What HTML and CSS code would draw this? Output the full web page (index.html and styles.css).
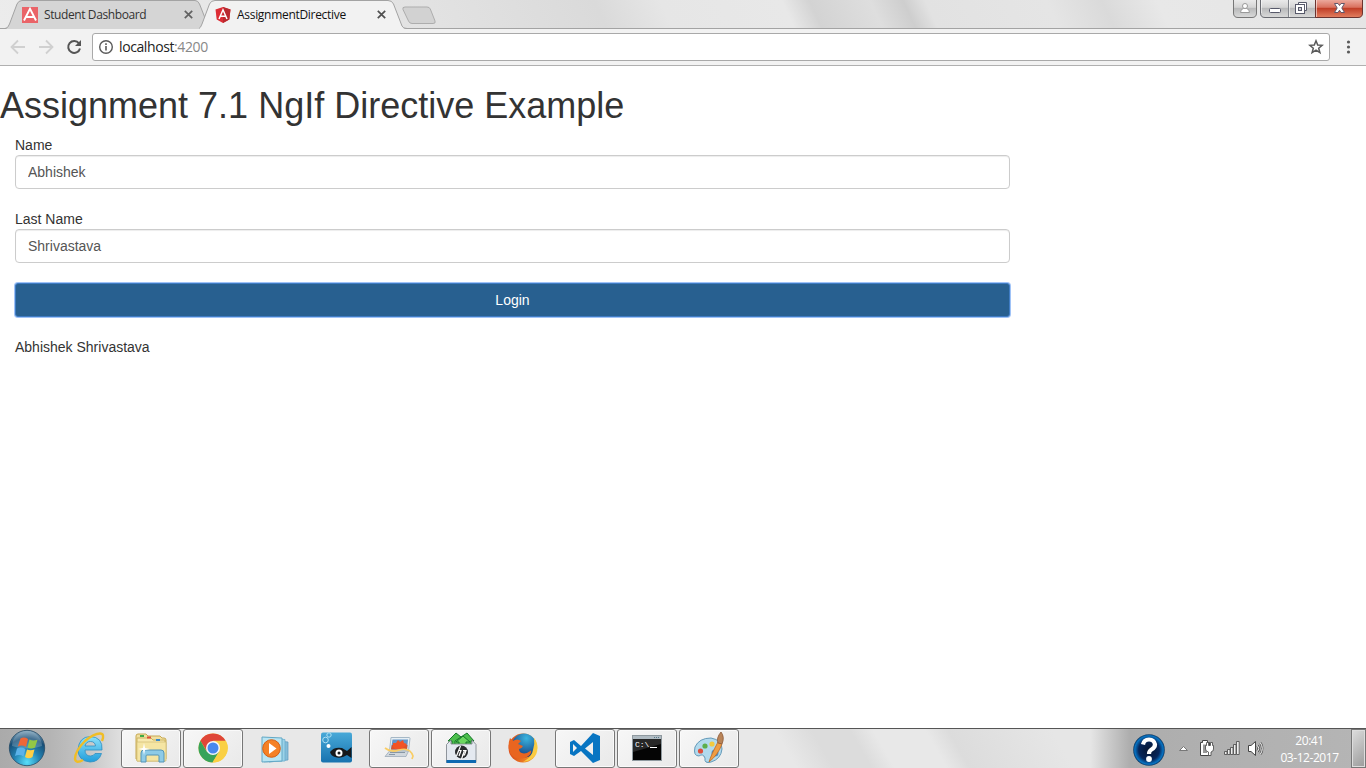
FILE: index.html
```html
<!DOCTYPE html>
<html lang="en">
<head>
<meta charset="utf-8">
<title>AssignmentDirective</title>
<link rel="stylesheet" href="styles.css">
</head>
<body>
<div class="screen">
  <header class="tabstrip">
    <div class="tab tab-back">
      <svg class="tab-shape" width="207" height="29" viewBox="0 0 207 29"><path d="M1 29Q3 28 4.500 24L12 4Q13.500 .5 17 .5H190Q193 .5 194.500 4L204 29Z" fill="#d5d5d5"/><path d="M0 28.500Q3 28.500 4.500 24L12 4Q13.500 .5 17 .5H190Q193 .5 194.500 4L200 18" fill="none" stroke="#a3a3a3"/></svg>
      <svg class="fav" width="16" height="16" viewBox="0 0 16 16"><path d="M0 0H16V16H0Z" fill="#ea6468"/><path d="M2 13.500L8 1.800L14 13.500M4.500 10H11.500" fill="none" stroke="#fff" stroke-width="1.900"/></svg>
      <span class="tab-title title-one">Student Dashboard</span>
      <svg class="tab-x" width="9" height="9" viewBox="0 0 9 9"><path d="M.8 .8L8.200 8.200M8.200 .8L.8 8.200" stroke="#626262" stroke-width="1.700"/></svg>
    </div>
    <div class="tab tab-front">
      <svg class="tab-shape" width="210" height="29" viewBox="0 0 210 29"><path d="M0 29Q1.500 28 3 24L10.500 4Q12 .5 16 .5H189Q193 .5 194.500 4L203 26Q204 29 208 29Z" fill="#f2f2f2"/><path d="M0 28.500Q1.500 28 3 24L10.500 4Q12 .5 16 .5H189Q193 .5 194.500 4L203 26Q204 28.500 208 28.500" fill="none" stroke="#a3a3a3"/></svg>
      <svg class="fav" width="16" height="16" viewBox="0 0 16 16"><path d="M8 0L15.500 2.600L14.300 12.500L8 16L1.700 12.500L.5 2.600Z" fill="#dd2c35"/><path d="M8 0L15.500 2.600L14.300 12.500L8 16Z" fill="#b92a30"/><path d="M4 12L8 2.800L12 12M5.700 9.300H10.300" fill="none" stroke="#fff" stroke-width="1.500"/></svg>
      <span class="tab-title title-two">AssignmentDirective</span>
      <svg class="tab-x" width="9" height="9" viewBox="0 0 9 9"><path d="M.8 .8L8.200 8.200M8.200 .8L.8 8.200" stroke="#505050" stroke-width="1.700"/></svg>
    </div>
    <svg class="newtab" width="36" height="19" viewBox="0 0 36 19"><path d="M4 1H26Q28.500 1 29.300 3L34 15Q35 17.500 32 17.500H11Q8.500 17.500 7.500 15L2 3.500Q1 1 4 1Z" fill="#d2d2d2" stroke="#adadad"/></svg>
    <div class="win-controls">
      <svg width="134" height="20" viewBox="0 0 134 20">
        <defs>
          <linearGradient id="glass" x2="0" y2="1"><stop offset="0" stop-color="#ededed"/><stop offset=".45" stop-color="#d4d4d4"/><stop offset=".5" stop-color="#b8b9ba"/><stop offset="1" stop-color="#dadada"/></linearGradient>
          <linearGradient id="red" x2="0" y2="1"><stop offset="0" stop-color="#eeb0a4"/><stop offset=".45" stop-color="#d9705d"/><stop offset=".5" stop-color="#c03d26"/><stop offset="1" stop-color="#e38061"/></linearGradient>
        </defs>
        <path d="M1.500 -1V13Q1.500 17.500 6 17.500H20Q24.500 17.500 24.500 13V-1Z" fill="url(#glass)" stroke="#777"/>
        <path d="M28.500 -1V13Q28.500 17.500 33 17.500H84V-1Z" fill="url(#glass)" stroke="#686a70"/>
        <path d="M83.500 -1V17.500H126Q130.500 17.500 130.500 13V-1Z" fill="url(#red)" stroke="#6c332f"/>
        <path d="M56.500 0V17" stroke="#83868c"/>
        <path d="M57.500 0V17M29.500 0V13M84.500 0V17" stroke="#fff" stroke-opacity=".55"/>
        <path d="M8.500 12.500Q8.500 9 11.500 8.500H14.500Q17.500 9 17.500 12.500Z" fill="#fff" stroke="#999"/><circle cx="13" cy="6" r="2.500" fill="#fff" stroke="#999"/>
        <rect x="37.500" y="8.500" width="11" height="4" rx="1" fill="#fff" stroke="#57596a"/>
        <path d="M66.500 4.500V2.500H74.500V10.500H72.500" fill="#fff" stroke="#57596a"/><rect x="63.500" y="4.500" width="9" height="9" fill="#fff" stroke="#57596a"/><rect x="66.500" y="7.500" width="3" height="3" fill="#d0d0d6" stroke="#57596a"/>
        <path d="M102.500 3.500H106L107.500 5.500L109 3.500H112.500L109.800 8L112.500 12.500H109L107.500 10.200L106 12.500H102.500L105.200 8Z" fill="#fff" stroke="#62576a"/>
      </svg>
    </div>
  </header>

  <div class="toolbar">
    <svg class="nav" width="92" height="36" viewBox="0 0 92 36">
      <path d="M25 18H12M18 11.500L11.500 18L18 24.500M39 18H52M46 11.500L52.500 18L46 24.500" fill="none" stroke="#d0d0d0" stroke-width="1.800"/>
      <path d="M79 14.300A6 6 0 1 0 80 19.500" fill="none" stroke="#555" stroke-width="2"/><path d="M81 11V17H75Z" fill="#555"/>
    </svg>
    <div class="omnibox">
      <svg width="16" height="16" viewBox="0 0 16 16"><circle cx="8" cy="8" r="6.300" fill="none" stroke="#5a5a5a" stroke-width="1.400"/><path d="M8 7V11.500M8 4.300V5.900" stroke="#5a5a5a" stroke-width="1.600"/></svg>
      <span class="url">localhost<span class="port">:4200</span></span>
      <svg class="star" width="16" height="16" viewBox="0 0 16 16"><path d="M8 1.800L9.700 6L14.200 6.300L10.700 9.200L11.900 13.700L8 11.200L4.100 13.700L5.300 9.200L1.800 6.300L6.300 6Z" fill="none" stroke="#5a5a5a" stroke-width="1.500"/></svg>
    </div>
    <svg class="dots" width="6" height="16" viewBox="0 0 6 16"><g fill="#5a5a5a"><circle cx="3.500" cy="3" r="1.600"/><circle cx="3.500" cy="8" r="1.600"/><circle cx="3.500" cy="13" r="1.600"/></g></svg>
  </div>

  <main class="page">
    <h1>Assignment 7.1 NgIf Directive Example</h1>
    <form class="form">
      <label for="first">Name</label>
      <input id="first" class="field" type="text" value="Abhishek">
      <label for="last" class="second">Last Name</label>
      <input id="last" class="field" type="text" value="Shrivastava">
      <button type="button" class="login">Login</button>
      <p class="result">Abhishek Shrivastava</p>
    </form>
  </main>

  <footer class="taskbar">
    <div class="start">
      <svg width="40" height="38" viewBox="0 0 40 38">
        <defs><radialGradient id="orb" cx=".5" cy=".9" r=".9"><stop offset="0" stop-color="#59dffa"/><stop offset=".4" stop-color="#2384b4"/><stop offset=".75" stop-color="#174e77"/><stop offset="1" stop-color="#7fa4bb"/></radialGradient></defs>
        <circle cx="20" cy="19" r="17.700" fill="url(#orb)" stroke="#244a66" stroke-width=".8"/>
        <path d="M5 17A15 15 0 0 1 35 17Q20 22 5 17Z" fill="#fff" opacity=".2"/>
        <path d="M13.500 9.500Q17 7.500 21 10L19 18Q15 15.500 10.800 17.500Z" fill="#ef6637"/><path d="M22.500 10.500Q26 12.500 30.500 10.800L28 18.500Q24 20.500 20.500 18.500Z" fill="#93c746"/><path d="M10 19.500Q14 17.500 18.500 20L16.500 27.500Q12.500 25 8 27Z" fill="#5bb2e9"/><path d="M20 20.500Q23 22 27.500 20.500L25.500 28Q22 30.500 18 28Z" fill="#fdcf45"/>
      </svg>
    </div>
    <div class="task">
      <svg width="36" height="36" viewBox="0 0 36 36"><defs><linearGradient id="ie" x2="0" y2="1"><stop stop-color="#8ce2fb"/><stop offset="1" stop-color="#219ddb"/></linearGradient></defs><path d="M31 20H14Q14 26 19.500 26Q22.500 26 24 23.500H30.500Q28 32 19 32Q7 31 7 19.500Q8 7 19 6.500Q32 7 31 20ZM14 16H24.500Q24 11.500 19.500 11.500Q15 11.500 14 16Z" fill="url(#ie)" stroke="#2f8fc2" stroke-width=".8"/><path d="M31 11Q34 3.500 29 3.500Q23 3.500 14 11Q4 21 4 29Q5 34 12 30" fill="none" stroke="#f0bd26" stroke-width="2.400"/></svg>
    </div>
    <div class="task open">
      <svg width="36" height="36" viewBox="0 0 36 36"><path d="M3 6Q3 4 5 4H13L15 6H27L29 8H31Q33 8 33 10V29H3Z" fill="#f0dfa0" stroke="#c7a952"/><path d="M4 8H18L20 10H32V31H4Z" fill="#f7e9ae" stroke="#ccb461"/><path d="M4 12H33V31H4Z" fill="#f5e5a3" stroke="#d1bc73" stroke-width=".7"/><path d="M7 5H11V7H7Z" fill="#3eab46"/><path d="M14 6.500H18V8.500H14Z" fill="#df5039"/><path d="M23 9H27V11H23Z" fill="#398ac9"/><path d="M8 32V23Q8 20 11 20H28Q31 20 31 23V32H26V26Q26 25 25 25H14Q13 25 13 26V32Z" fill="#8ecbe7" stroke="#5594b7"/><path d="M11 13L12 18L17 19L12 20L11 25L10 20L5 19L10 18Z" fill="#fff"/></svg>
    </div>
    <div class="task open">
      <svg width="36" height="36" viewBox="0 0 36 36"><circle cx="18" cy="18" r="14.500" fill="#f9d247"/><path d="M5.400 10.700A14.500 14.500 0 0 1 30.600 10.700H18L12 21.500Z" fill="#df4638"/><path d="M5.400 10.700A14.500 14.500 0 0 0 17.500 32.500L24 21.500H11.700Z" fill="#37a35a"/><path d="M18 11H31A14.500 14.500 0 0 1 17.500 32.500L24.500 21.500Z" fill="#fad044"/><circle cx="18" cy="18" r="7" fill="#f4f6fa"/><circle cx="18" cy="18" r="5.500" fill="#4788ee"/></svg>
    </div>
    <div class="task">
      <svg width="36" height="36" viewBox="0 0 36 36"><path d="M12 10L31 12V30L12 32Z" fill="#86bdd9" stroke="#5b99bd" stroke-width=".7"/><path d="M7 8L28 9.500V31L7 32Z" fill="#9cd2e8" stroke="#65aecd" stroke-width=".7"/><path d="M5 7L25 8V31L5 32Z" fill="#b9e5f3" stroke="#62a8c6"/><circle cx="14.500" cy="18.500" r="8.800" fill="#f58125" stroke="#d55f14"/><path d="M12 13L19.500 18.500L12 24Z" fill="#fff"/></svg>
    </div>
    <div class="task">
      <svg width="36" height="36" viewBox="0 0 36 36"><defs><linearGradient id="sea" x2="0" y2="1"><stop stop-color="#48a9d8"/><stop offset="1" stop-color="#1772af"/></linearGradient></defs><rect x="2" y="2.500" width="31" height="30" rx="2" fill="url(#sea)"/><circle cx="6.500" cy="10" r="2.800" fill="none" stroke="#aee0f4"/><circle cx="10" cy="5" r="2.200" fill="none" stroke="#aee0f4"/><circle cx="9.500" cy="16" r="2" fill="#fff"/><path d="M11 22Q15 16.500 23 18L28 21L32.500 17V28L28 25Q22 29 16 27Q12 26 11 22Z" fill="#16191c"/><circle cx="20" cy="23" r="3.500" fill="#fff"/><circle cx="20" cy="23" r="1.500" fill="#16191c"/></svg>
    </div>
    <div class="task open">
      <svg width="36" height="36" viewBox="0 0 36 36"><path d="M10 7.500H28Q29 7.500 29 8.500L27.500 21H8.500Z" fill="#e7eff4" stroke="#a6b8c6"/><path d="M11.500 9.500H27L26 19.500H10Z" fill="#6495c8"/><path d="M10.800 15H26.500L26 19.500H10Z" fill="#d9532d"/><path d="M12 13L15 13L17 10L19 12L22 10L23 13L26 14L23 17L21 19H14L12 17Z" fill="#f35325"/><path d="M8.500 21H27.500L25 26.500H4Z" fill="#d0d7dd" stroke="#95a4b1" stroke-width=".7"/><path d="M9 22.500H24M8 24.500H14" stroke="#748697" stroke-width=".8"/><path d="M4 18Q10 23 18 20Q29 17 32 26L31 29" fill="none" stroke="#f9cd65" stroke-width="1.700"/></svg>
    </div>
    <div class="task open">
      <svg width="36" height="36" viewBox="0 0 36 36"><path d="M9 15V11H5L13 3L18 7L24 3L31 11H28V15Z" fill="#4cbe4c" stroke="#15762a"/><path d="M16 15V12H13L20 6L27 12H23V15M12 15V11L18 7" fill="#6bd75f" stroke="#15762a"/><path d="M3.500 14.500L8 10V14H29V10L33 14.500V32.500H3.500Z" fill="#e4e9f0" stroke="#777e86" stroke-width=".8"/><path d="M3.500 30H33V33H3.500Z" fill="#0d69b1"/><circle cx="18.500" cy="22" r="6.500" fill="#292b2e"/><path d="M17.500 16L13.500 26M15.500 20.500H18L16 26M21.500 20.500L18.500 29M20 20.500H23L21.500 25H19" fill="none" stroke="#fff" stroke-width="1.200"/></svg>
    </div>
    <div class="task">
      <svg width="36" height="36" viewBox="0 0 36 36"><defs><linearGradient id="fire"><stop stop-color="#d9481b"/><stop offset=".7" stop-color="#f08a25"/><stop offset="1" stop-color="#fcda4c"/></linearGradient><radialGradient id="globe" cx=".6" cy=".2" r=".8"><stop stop-color="#3ab4df"/><stop offset="1" stop-color="#143a7e"/></radialGradient></defs><circle cx="18" cy="18" r="14.500" fill="url(#fire)"/><circle cx="19" cy="15.500" r="12" fill="url(#globe)"/><path d="M5 8L8 11Q12 8 16 11L13 14L18 16Q17 18.500 14 19Q14 23 19 23.500Q23 23 26 20.500Q27 25 20 28Q10 30 5.500 24Q2 16 5 8Z" fill="#e96520"/><path d="M29 8Q34 14 31.500 21Q29 31 18 32Q27 27 28 20Q30 14 29 8Z" fill="#f9cb42"/></svg>
    </div>
    <div class="task open">
      <svg width="36" height="36" viewBox="0 0 36 36"><path fill-rule="evenodd" d="M3 12L7 10L14 16L26 3L33 6V30L26 33L14 21L7 26L3 24ZM6 14V22L10 18ZM18 18.500L26 25V12Z" fill="#0875c2"/></svg>
    </div>
    <div class="task open">
      <svg width="36" height="36" viewBox="0 0 36 36"><rect x="3.500" y="5.500" width="29" height="25" fill="#050505" stroke="#8f999f"/><path d="M4 6H32V9H4Z" fill="#b0bbc2"/><path d="M25 7.500H31" stroke="#537688" stroke-dasharray="1 1"/><path d="M4 9H32V14L4 22Z" fill="#777" opacity=".3"/><text x="6" y="17" class="console">C:\</text><path d="M21 17.500H28" stroke="#fff"/></svg>
    </div>
    <div class="task open">
      <svg width="36" height="36" viewBox="0 0 36 36"><path d="M4 17Q8 8 20 8Q31 10 31 19Q30 29 20 32Q13 34 14 28Q12 23 8 26Q2 26 4 17Z" fill="#b2daed" stroke="#6399b8"/><circle cx="9.500" cy="21" r="2.600" fill="#dd503e"/><circle cx="14" cy="16" r="2.600" fill="#5caf4c"/><circle cx="21" cy="14" r="2.600" fill="#f3ca3f"/><circle cx="24" cy="23" r="3.500" fill="#498dc5"/><path d="M18 32Q20 25 27 12L31 14Q27 25 18 32Z" fill="#ef9d43" stroke="#bd6824" stroke-width=".8"/><path d="M27 13Q25 8 30 2Q34 7 31 14Z" fill="#b98458" stroke="#8c5937" stroke-width=".8"/></svg>
    </div>
    <div class="tray">
      <svg class="help" width="34" height="34" viewBox="0 0 34 34"><defs><radialGradient id="q"><stop stop-color="#071530"/><stop offset=".65" stop-color="#07265a"/><stop offset=".9" stop-color="#0874c4"/><stop offset="1" stop-color="#0c355e"/></radialGradient></defs><circle cx="17" cy="17" r="15.800" fill="url(#q)"/><path d="M11 11.500Q12 6.500 17 6.500T23 11.500Q23 14.500 19.500 16.500Q17 18 17 21" fill="none" stroke="#fff" stroke-width="4.200"/><circle cx="17" cy="26" r="2.900" fill="#fff"/></svg>
      <svg class="signals" width="90" height="24" viewBox="0 0 90 24">
        <path d="M3.500 13.500L7.500 9.500L11.500 13.500Z" fill="#fff" stroke="#777"/>
        <path d="M24.500 5.500H26.500V3.500H31.500V5.500H33.500V18.500H24.500Z" fill="#fff" stroke="#444"/><path d="M27 7.500H31V16H27Z" fill="#999"/><path d="M29.500 8.500V12Q29.500 14.500 32.500 15V18.500H35V15Q37.500 14.500 37.500 12V8.500H36.500V5.500H34.500V8.500H32.500V5.500H30.500V8.500Z" fill="#fff" stroke="#444" stroke-width=".8"/>
        <path d="M48.500 14.500H51V17.500H48.500ZM51.500 12.500H54V17.500H51.500ZM54.500 10.500H57V17.500H54.500ZM57.500 7.500H60V17.500H57.500ZM60.500 4.500H63.200V17.500H60.500Z" fill="#eee" stroke="#555" stroke-width=".9"/>
        <path d="M72.500 8.500H75L79.500 4.500V18.500L75 14.500H72.500Z" fill="#fff" stroke="#444"/><path d="M81.500 8.500Q84 11.500 81.500 14.500M84.500 6Q88 11.500 84.500 17" fill="none" stroke="#555" stroke-width="2.500"/><path d="M81.500 8.500Q84 11.500 81.500 14.500M84.500 6Q88 11.500 84.500 17" fill="none" stroke="#fff"/>
      </svg>
      <div class="clock"><span>20:41</span><span>03-12-2017</span></div>
      <div class="peek"></div>
    </div>
  </footer>
</div>
</body>
</html>
```
FILE: styles.css
```css
* { box-sizing: border-box; }
body { margin: 0; background: #fff; font-family: "Liberation Sans", Arial, sans-serif; }
svg { display: block; flex: none; }
.screen { width: 1366px; height: 768px; display: flex; flex-direction: column; overflow: hidden; }

.tabstrip {
  height: 29px; flex: none; display: flex; align-items: flex-start;
  padding-left: 5px; border-bottom: 1px solid #a3a3a3;
  background: linear-gradient(65deg, #ececec 0, #e2e2e2 400px, #dadada 550px, #e6e6e6 610px, #e8e8e8 720px, #d3d3d3 745px, #dedede 800px, #cecece 830px, #e2e2e2 850px, #e5e5e5 960px, #dadada 1010px, #e8e8e8 1060px, #e5e5e5 1240px);
}
.tab { position: relative; height: 29px; flex: none; display: flex; align-items: center; }
.tab-back { width: 194px; padding-left: 17px; }
.tab-front { width: 208px; padding-left: 16px; }
.tab-shape { position: absolute; left: 0; top: 0; }
.fav { position: relative; }
.tab-title { position: relative; margin-left: 6px; font: 12px/16px "Open Sans", sans-serif; color: #333; white-space: nowrap; }
.title-one { width: 134px; letter-spacing: -0.4px; }
.title-two { width: 134px; color: #111; letter-spacing: -0.3px; }
.tab-x { position: relative; margin-left: 6px; }
.newtab { margin: 6px 0 0 -6px; }
.win-controls { margin-left: auto; }

.toolbar { height: 37px; flex: none; display: flex; align-items: center; background: #f2f2f2; border-bottom: 1px solid #b0b0b0; }
.omnibox { width: 1238px; height: 28px; padding: 0 5px; display: flex; align-items: center; background: #fff; border: 1px solid #a9a9a9; border-radius: 3px; }
.url { margin-left: 5px; font: 14px/20px "Open Sans", sans-serif; letter-spacing: -0.4px; color: #222; }
.port { color: #888; }
.star { margin-left: auto; }
.dots { margin-left: 15px; }

.page { flex: 1; min-height: 0; color: #333; font-size: 14px; line-height: 20px; }
h1 { margin: 20px 0 10px; font-size: 36px; line-height: 39px; font-weight: 500; }
.form { width: 1025px; padding: 0 15px; display: flex; flex-direction: column; }
.field { height: 34px; padding: 6px 12px; border: 1px solid #ccc; border-radius: 4px; font: 14px/20px "Liberation Sans", Arial, sans-serif; color: #555; box-shadow: inset 0 1px 1px rgba(0,0,0,.075); }
.second { margin-top: 20px; }
.login { height: 34px; margin-top: 20px; border: 1px solid #3f7cc4; border-radius: 3px; background: #286090; color: #fff; font: 14px/20px "Liberation Sans", Arial, sans-serif; box-shadow: 0 0 0 1px #a0c3f7; }
.result { margin: 20px 0 0; }

.taskbar {
  height: 40px; flex: none; display: flex; border-top: 1px solid #555;
  background: linear-gradient(90deg, #aaa 0, #b4b4b4 50px, #c4c4c4 85px, #e2e2e2 125px, transparent 150px, transparent 1090px, #adadad 1130px, #b5b5b5 1366px), linear-gradient(60deg, #e8e8e8 0, #e8e8e8 690px, #dcdcdc 722px, #dcdcdc 755px, #e8e8e8 775px, #e8e8e8 820px, #dcdcdc 840px, #e6e6e6 930px);
}
.start { width: 59px; padding-left: 7px; }
.task { width: 60px; height: 39px; margin-right: 2px; padding-top: 1px; display: flex; justify-content: center; }
.open { border: 1px solid #777; border-radius: 3px; padding-top: 0; background: linear-gradient(135deg, #f7f7f7, #e9e9e9); box-shadow: inset 0 0 0 1px #fafafa; }
.console { font: 8px "Liberation Mono", monospace; fill: #fff; }
.tray { margin-left: auto; display: flex; align-items: center; }
.help { margin-right: 9px; margin-top: 2px; }
.signals { margin: 1px -1px 0 1px; }
.clock { width: 86px; padding: 0 0 0 3px; display: flex; flex-direction: column; align-items: center; color: #fff; font: 12px/17px "Open Sans", sans-serif; letter-spacing: -0.45px; }
.peek { width: 15px; height: 39px; border: 1px solid #777; box-shadow: inset 0 0 0 1px #ddd; background: linear-gradient(135deg, #ddd, #9b9b9b); }
```
